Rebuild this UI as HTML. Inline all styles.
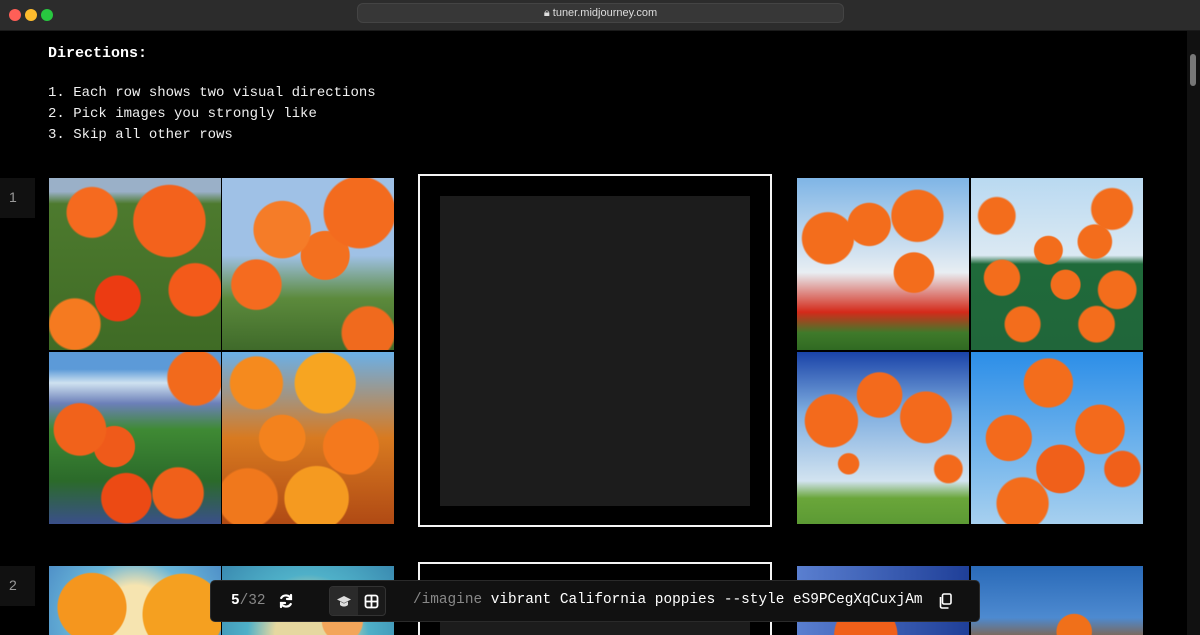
<!DOCTYPE html>
<html style="width:1200px;height:635px;overflow:hidden"><head><meta charset="utf-8"><style>
*{margin:0;padding:0;box-sizing:border-box}
body{width:1200px;height:635px;overflow:hidden;background:#000;font-family:"Liberation Mono",monospace;color:#e8e8e8;position:relative}
.top{position:absolute;left:0;top:0;width:1200px;height:31px;background:#2c2c2c;border-bottom:1px solid #1a1a1a}
.dot{position:absolute;top:9px;width:12px;height:12px;border-radius:50%}
.url{position:absolute;left:357px;top:3px;width:487px;height:20px;background:#373737;border:1px solid #444;border-radius:6px;font:11px "Liberation Sans",sans-serif;color:#ddd;text-align:center;line-height:18px}
.sb{position:absolute;left:1187px;top:31px;width:13px;height:604px;background:#111}
.sb i{position:absolute;left:3px;top:23px;width:6px;height:32px;border-radius:3px;background:#777}
h1{position:absolute;left:48px;top:45px;font-size:15px;font-weight:bold;color:#fff}
ol{position:absolute;left:48px;top:83px;list-style:none;font-size:14px;line-height:21px;color:#f0f0f0}
.num{position:absolute;left:0;width:35px;height:40px;background:#111;color:#999;font:14px "Liberation Sans",sans-serif;padding:11px 0 0 9px}
.t{position:absolute;width:172px;height:172px;overflow:hidden}
.r2{height:69px}
.mid{position:absolute;left:418px;width:354px;border:2px solid #f4f4f4;background:#000}
.mid i{position:absolute;left:20px;top:20px;right:20px;bottom:19px;background:#1c1c1c}
.bar{position:absolute;left:210px;top:580px;width:770px;height:42px;background:#111;border:1px solid #2a2a2a;border-radius:5px;font-size:14.4px}
</style></head><body>
<div class="top">
<span class="dot" style="left:9px;background:#fe5f57"></span>
<span class="dot" style="left:25px;background:#febc2e"></span>
<span class="dot" style="left:41px;background:#28c840"></span>
<div class="url">🔒&#xFE0E; tuner.midjourney.com</div>
</div>
<div class="sb"><i></i></div>
<h1>Directions:</h1>
<ol><li>1. Each row shows two visual directions</li><li>2. Pick images you strongly like</li><li>3. Skip all other rows</li></ol>

<div class="num" style="top:178px">1</div>
<div class="t" style="left:49px;top:178px;background:radial-gradient(circle at 70% 25%,#f3621c 0 20%,transparent 21%),radial-gradient(circle at 25% 20%,#f56a1f 0 13%,transparent 14%),radial-gradient(circle at 40% 70%,#ec3b12 0 14%,transparent 15%),radial-gradient(circle at 15% 85%,#f57a20 0 12%,transparent 13%),radial-gradient(circle at 85% 65%,#f35a1a 0 14%,transparent 15%),linear-gradient(#9ab0c8 0 8%,#4d7a2e 15%,#3f6b25)"></div>
<div class="t" style="left:222px;top:178px;background:radial-gradient(circle at 35% 30%,#f57c28 0 17%,transparent 18%),radial-gradient(circle at 80% 20%,#f36b1e 0 18%,transparent 19%),radial-gradient(circle at 60% 45%,#f3701f 0 17%,transparent 18%),radial-gradient(circle at 20% 62%,#f56b1f 0 14%,transparent 15%),radial-gradient(circle at 85% 90%,#f06a1e 0 12%,transparent 13%),linear-gradient(#9fc1e6 0 45%,#5c8a3c 70%,#3f6a2a)"></div>
<div class="t" style="left:49px;top:352px;background:radial-gradient(circle at 85% 15%,#f26a1c 0 13%,transparent 14%),radial-gradient(circle at 18% 45%,#f1621b 0 15%,transparent 16%),radial-gradient(circle at 38% 55%,#ef5a1a 0 14%,transparent 15%),radial-gradient(circle at 45% 85%,#ec4a14 0 14%,transparent 15%),radial-gradient(circle at 75% 82%,#f0601a 0 13%,transparent 14%),linear-gradient(#5c9ad8 0 10%,#cfe2f0 18%,#6b7fb8 30%,#3f8a34 45%,#2b6a2a 75%,#3a4f8a)"></div>
<div class="t" style="left:222px;top:352px;background:radial-gradient(circle at 60% 18%,#f7a521 0 17%,transparent 18%),radial-gradient(circle at 20% 18%,#f58a1e 0 13%,transparent 14%),radial-gradient(circle at 35% 50%,#f3821d 0 16%,transparent 17%),radial-gradient(circle at 75% 55%,#f4791d 0 17%,transparent 18%),radial-gradient(circle at 55% 85%,#f59a20 0 18%,transparent 19%),radial-gradient(circle at 15% 85%,#f0781c 0 14%,transparent 15%),linear-gradient(#6ab0e8,#d87a20 50%,#b04a14)"></div>

<div class="mid" style="top:174px;height:353px"><i></i></div>

<div class="t" style="left:797px;top:178px;background:radial-gradient(circle at 18% 35%,#f36d1c 0 14%,transparent 15%),radial-gradient(circle at 42% 27%,#f36d1c 0 13%,transparent 14%),radial-gradient(circle at 70% 22%,#f36d1c 0 14%,transparent 15%),radial-gradient(circle at 68% 55%,#f36d1c 0 13%,transparent 14%),linear-gradient(#7fb5e6,#e8eef3 55%,#d42a1a 78%,#3f7a2a 90%,#306a22)"></div>
<div class="t" style="left:971px;top:178px;background:radial-gradient(circle at 15% 22%,#f36d1c 0 9%,transparent 10%),radial-gradient(circle at 82% 18%,#f36d1c 0 10%,transparent 11%),radial-gradient(circle at 45% 42%,#f36d1c 0 10%,transparent 11%),radial-gradient(circle at 72% 37%,#f36d1c 0 10%,transparent 11%),radial-gradient(circle at 18% 58%,#f36d1c 0 10%,transparent 11%),radial-gradient(circle at 55% 62%,#f36d1c 0 10%,transparent 11%),radial-gradient(circle at 85% 65%,#f36d1c 0 10%,transparent 11%),radial-gradient(circle at 30% 85%,#f36d1c 0 9%,transparent 10%),radial-gradient(circle at 73% 85%,#f36d1c 0 9%,transparent 10%),linear-gradient(#b9d9f1,#dbe9f3 45%,#1f6a3a 50%,#20663a)"></div>
<div class="t" style="left:797px;top:352px;background:radial-gradient(circle at 20% 40%,#f36a1c 0 15%,transparent 16%),radial-gradient(circle at 48% 25%,#f36a1c 0 14%,transparent 15%),radial-gradient(circle at 75% 38%,#f36a1c 0 15%,transparent 16%),radial-gradient(circle at 30% 65%,#f36a1c 0 6%,transparent 7%),radial-gradient(circle at 88% 68%,#f36a1c 0 7%,transparent 8%),linear-gradient(#1a43a8,#7faee0 35%,#d2e3f0 75%,#6aa63a 85%,#5c9a34)"></div>
<div class="t" style="left:971px;top:352px;background:radial-gradient(circle at 45% 18%,#f36d1c 0 14%,transparent 15%),radial-gradient(circle at 22% 50%,#f36a1c 0 14%,transparent 15%),radial-gradient(circle at 75% 45%,#f36a1c 0 15%,transparent 16%),radial-gradient(circle at 52% 68%,#f0601a 0 16%,transparent 17%),radial-gradient(circle at 88% 68%,#f0601a 0 9%,transparent 10%),radial-gradient(circle at 30% 88%,#f36d1c 0 13%,transparent 14%),linear-gradient(#2c8ee8,#6fb3ec 55%,#a7d0ef)"></div>

<div class="num" style="top:566px">2</div>
<div class="t r2" style="left:49px;top:566px;background:radial-gradient(circle at 25% 60%,#f5961e 0 25%,transparent 26%),radial-gradient(circle at 78% 70%,#f5a020 0 28%,transparent 29%),radial-gradient(circle at 50% 80%,#f6e4b0 0 35%,#68b5d8 60%,#4f90c8)"></div>
<div class="t r2" style="left:222px;top:566px;background:radial-gradient(circle at 70% 80%,#f3a55a 0 15%,transparent 16%),radial-gradient(circle at 50% 100%,#e6d8a0 0 30%,#4fb0c8 55%,#3a8ab0)"></div>
<div class="mid" style="top:562px;height:80px"><i style="bottom:0"></i></div>
<div class="t r2" style="left:797px;top:566px;background:radial-gradient(circle at 40% 100%,#f0601a 0 25%,transparent 26%),linear-gradient(90deg,#5a7fd0,#1f3f98)"></div>
<div class="t r2" style="left:971px;top:566px;background:radial-gradient(circle at 60% 95%,#f0701a 0 14%,transparent 15%),linear-gradient(#2a6ab8,#4d8ad0 75%,#7a6a60)"></div>

<div class="bar">
<span style="position:absolute;left:20px;top:12px;color:#fff;font-weight:bold">5<span style="color:#888;font-weight:normal">/32</span></span>
<svg style="position:absolute;left:67px;top:12px" width="16" height="16" viewBox="0 0 16 16" fill="none" stroke="#fff" stroke-width="2.2" stroke-linecap="round"><path d="M13 6A5.5 5.5 0 0 0 3.2 5M3 10a5.5 5.5 0 0 0 9.8 1"/><path d="M13 2v4H9M3 14v-4h4"/></svg>
<div style="position:absolute;left:118px;top:5px;width:57px;height:30px;border:1px solid #333;border-radius:4px;background:#1a1a1a">
<div style="position:absolute;left:0;top:0;width:28px;height:28px;background:#2a2a2a;border-radius:3px 0 0 3px"></div>
<svg style="position:absolute;left:7px;top:8px" width="14" height="12" viewBox="0 0 14 12" fill="#ddd"><path d="M7 1L0 4.5 7 8l7-3.5z"/><path d="M3 6.5v3c0 1 2 2 4 2s4-1 4-2v-3L7 8.5z"/></svg>
<svg style="position:absolute;left:34px;top:7px" width="15" height="15" viewBox="0 0 15 15" fill="none" stroke="#fff" stroke-width="1.8"><rect x="1.5" y="1.5" width="12" height="12" rx="2"/><path d="M7.5 1.5v12M1.5 7.5h12"/></svg>
</div>
<span style="position:absolute;left:202px;top:11px;white-space:nowrap;color:#fff"><span style="color:#888">/imagine</span> vibrant California poppies --style eS9PCegXqCuxjAm</span>
<svg style="position:absolute;left:727px;top:12px" width="14" height="16" viewBox="0 0 14 16" fill="none" stroke="#fff" stroke-width="1.6"><rect x="4.5" y="1" width="8.5" height="10" rx="1.5"/><path d="M2.5 4v9.5a1.5 1.5 0 0 0 1.5 1.5h6.5"/></svg>
</div>
</body></html>
